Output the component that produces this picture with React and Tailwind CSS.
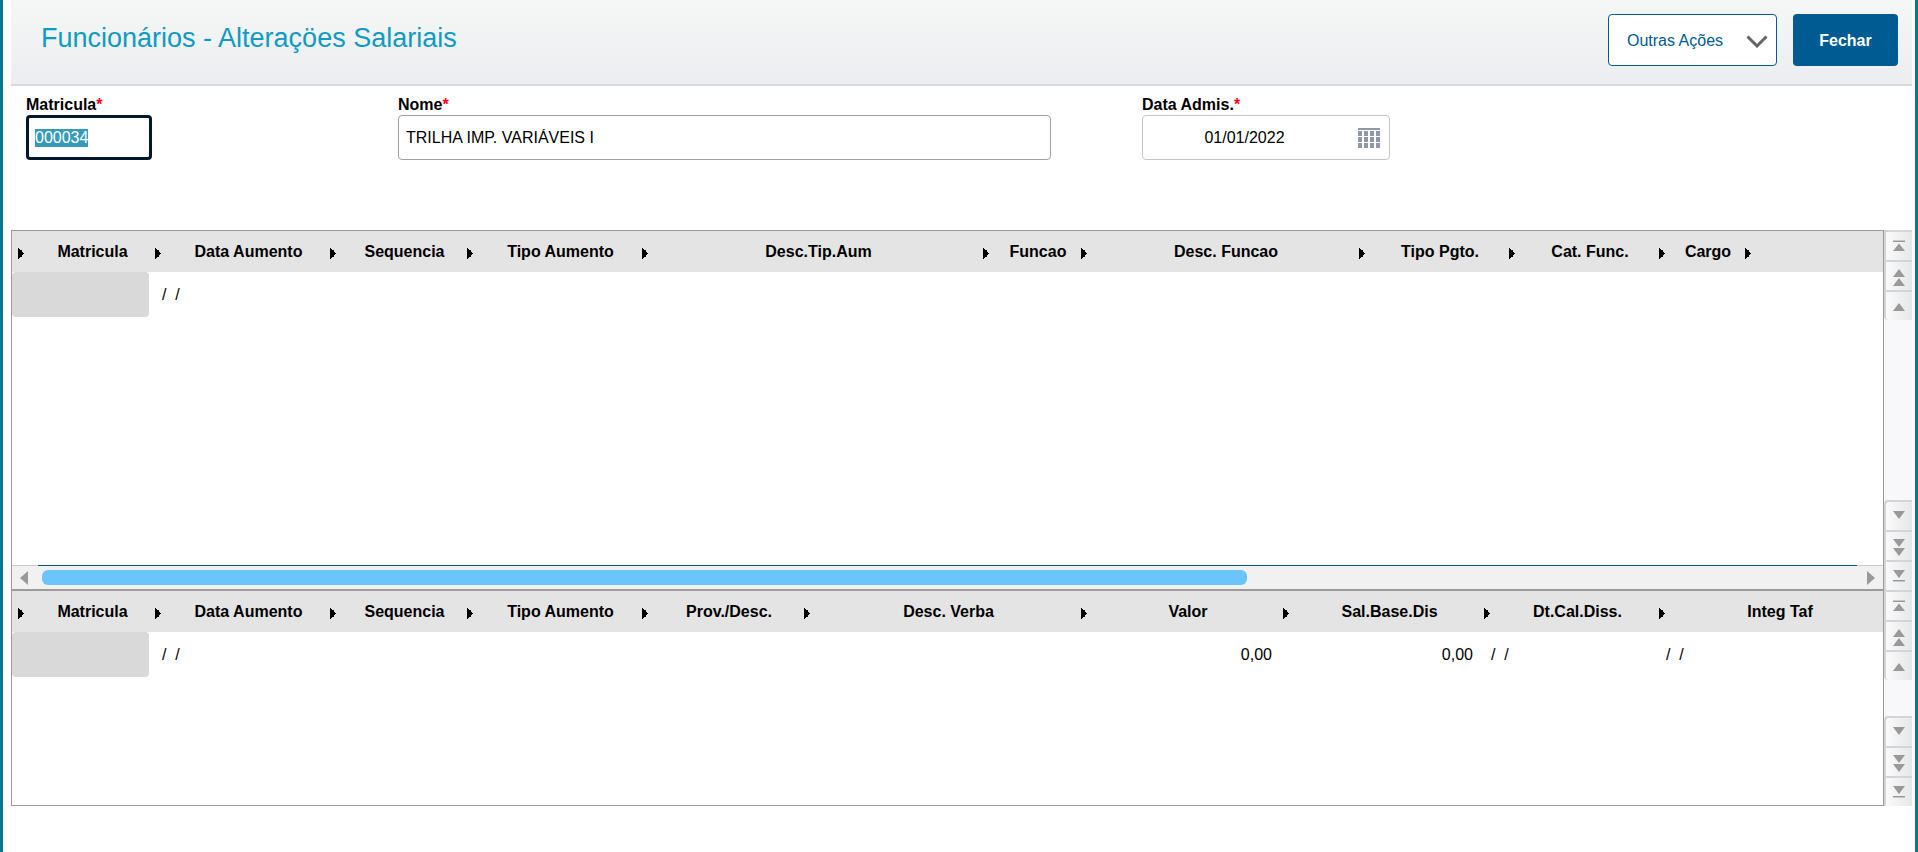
import { useEffect, useRef } from 'react'

const salaryColumns = [
  { label: 'Matricula', width: 137, locked: true },
  { label: 'Data Aumento', width: 175, value: '/  /' },
  { label: 'Sequencia', width: 137 },
  { label: 'Tipo Aumento', width: 175 },
  { label: 'Desc.Tip.Aum', width: 341 },
  { label: 'Funcao', width: 98 },
  { label: 'Desc. Funcao', width: 278 },
  { label: 'Tipo Pgto.', width: 150 },
  { label: 'Cat. Func.', width: 150 },
  { label: 'Cargo', width: 86 },
  { label: '' },
]

const paymentColumns = [
  { label: 'Matricula', width: 137, locked: true },
  { label: 'Data Aumento', width: 175, value: '/  /' },
  { label: 'Sequencia', width: 137 },
  { label: 'Tipo Aumento', width: 175 },
  { label: 'Prov./Desc.', width: 162 },
  { label: 'Desc. Verba', width: 277 },
  { label: 'Valor', width: 202, value: '0,00', numeric: true },
  { label: 'Sal.Base.Dis', width: 201, value: '0,00', numeric: true },
  { label: 'Dt.Cal.Diss.', width: 175, value: '/  /' },
  { label: 'Integ Taf', value: '/  /' },
]

const navIcons = {
  first: 'M2 4.5h12V6H2zM8 7.5l6 7.5H2z',
  pageUp: 'M8 3l6 8H2zM8 12l6 8H2z',
  up: 'M8 7l6 8H2z',
  down: 'M8 13L2 5h12z',
  pageDown: 'M8 11L2 3h12zM8 20l-6-8h12z',
  last: 'M8 12L2 4h12zM2 14h12v1.5H2z',
}

function NavButton({ icon, label, rounded = '' }) {
  return (
    <button
      type="button"
      aria-label={label}
      className={`flex h-[30px] w-full items-center justify-center border-t-2 border-l-2 border-[#d4d5d6] bg-linear-to-r from-[#fafafb] to-[#e6e7e9] ${rounded}`}
    >
      <svg width="16" height="20" viewBox="0 0 16 20" fill="#999" aria-hidden="true">
        <path d={navIcons[icon]} />
      </svg>
    </button>
  )
}

function NavRail() {
  return (
    <div className="flex w-7 shrink-0 flex-col justify-between bg-[#f8f8fb]">
      <div>
        <NavButton icon="first" label="Primeiro registro" />
        <NavButton icon="pageUp" label="Página anterior" />
        <NavButton icon="up" label="Registro anterior" rounded="rounded-bl" />
      </div>
      <div>
        <NavButton icon="down" label="Próximo registro" rounded="rounded-tl" />
        <NavButton icon="pageDown" label="Próxima página" />
        <NavButton icon="last" label="Último registro" />
      </div>
    </div>
  )
}

function ColumnArrow() {
  return (
    <svg width="6" height="11" viewBox="0 0 6 11" className="mt-1 shrink-0" shapeRendering="crispEdges" aria-hidden="true">
      <path d="M0 0h1v1h1v1h2v2h1v1h1v1H5v1H4v2H2v1H1v1H0z" />
    </svg>
  )
}

function Grid({ name, columns }) {
  return (
    <table aria-label={name} className="w-full table-fixed border-collapse">
      <colgroup>
        {columns.map((col) => (
          <col key={col.label} style={{ width: col.width }} />
        ))}
      </colgroup>
      <thead>
        <tr className="h-[41px] bg-[#e4e4e4]">
          {columns.map((col) => (
            <th key={col.label} className="p-0 pl-1.5 font-bold whitespace-nowrap">
              <div className="flex items-center">
                <ColumnArrow />
                <span className="ml-3 flex-1 text-center">{col.label}</span>
              </div>
            </th>
          ))}
        </tr>
      </thead>
      <tbody>
        <tr className="h-[45px]">
          {columns.map((col) => (
            <td
              key={col.label}
              className={`p-0 whitespace-pre ${col.locked ? 'rounded-sm bg-[#d9d9d9]' : ''} ${
                col.numeric ? 'pr-[5px] text-right' : 'pl-[13px]'
              }`}
            >
              {col.value}
            </td>
          ))}
        </tr>
      </tbody>
    </table>
  )
}

function HorizontalScroll() {
  return (
    <div className="flex h-6 items-stretch bg-[#f1f1f1]">
      <button
        type="button"
        aria-label="Rolar para a esquerda"
        className="flex w-[26px] items-center justify-start border-t border-[#c9caca] pl-2"
      >
        <svg width="8" height="14" viewBox="0 0 8 14" fill="#999" aria-hidden="true">
          <path d="M8 0v14L0 7z" />
        </svg>
      </button>
      <div className="flex flex-1 items-center border-t border-[#005c8a] pl-1">
        <div className="h-[15px] w-[66.4%] rounded-md bg-[#6bc4fb]" />
      </div>
      <button
        type="button"
        aria-label="Rolar para a direita"
        className="flex w-[26px] items-center justify-end border-t border-[#c9caca] pr-2"
      >
        <svg width="8" height="14" viewBox="0 0 8 14" fill="#999" aria-hidden="true">
          <path d="M0 0v14l8-7z" />
        </svg>
      </button>
    </div>
  )
}

function FieldLabel({ htmlFor, children }) {
  return (
    <label htmlFor={htmlFor} className="block leading-5 font-bold">
      {children}
      <span className="text-[#ff0020]">*</span>
    </label>
  )
}

function CalendarIcon() {
  const cells = [3, 9, 15]
  return (
    <svg width="22" height="20" viewBox="0 0 22 20" fill="#9098a6" shapeRendering="crispEdges" aria-hidden="true">
      <rect width="22" height="2" />
      {cells.map((y) =>
        [0, 6, 12, 18].map((x) => <rect key={`${x}-${y}`} x={x} y={y} width="4" height="5" />),
      )}
    </svg>
  )
}

export default function App() {
  const matriculaRef = useRef(null)

  // The form opens with the first field ready to be overwritten
  useEffect(() => {
    matriculaRef.current?.focus()
    matriculaRef.current?.select()
  }, [])

  return (
    <div className="min-h-screen border-x-3 border-[#0b768f] bg-white pr-[3px] pl-2 font-['Liberation_Sans',Arial,sans-serif] text-base text-black">
      <header className="flex h-[86px] items-start justify-between border-b-2 border-[#d8d9da] bg-linear-to-b from-[#f5f7f6] to-[#ecedf0] pt-3.5 pr-3.5 pl-[30px]">
        <h1 className="pt-1.5 text-[27px] leading-9 text-[#109bc0]">Funcionários - Alteraçöes Salariais</h1>
        <div className="flex gap-4">
          <button
            type="button"
            className="flex h-[52px] w-[169px] items-center justify-between rounded-[4px] border border-[#005b92] bg-white pt-0.5 pr-2 pl-[18px] text-[#005b92]"
          >
            Outras Ações
            <svg width="22" height="14" viewBox="0 0 22 14" fill="none" stroke="#666" strokeWidth="3" aria-hidden="true">
              <path d="M1.5 2.5L11 12l9.5-9.5" />
            </svg>
          </button>
          <button type="button" className="h-[52px] w-[105px] rounded-[4px] bg-[#005b92] pt-0.5 font-bold text-white">
            Fechar
          </button>
        </div>
      </header>

      <form className="grid h-36 grid-cols-[372px_744px_1fr] items-start pt-[9px] pl-[15px]">
        <div>
          <FieldLabel htmlFor="matricula">Matricula</FieldLabel>
          <input
            id="matricula"
            ref={matriculaRef}
            defaultValue="000034"
            className="h-[45px] w-[126px] rounded-[4px] border-[3px] border-[#04182c] px-1.5 outline-none selection:bg-[#369ab8] selection:text-white"
          />
        </div>
        <div>
          <FieldLabel htmlFor="nome">Nome</FieldLabel>
          <input
            id="nome"
            defaultValue="TRILHA IMP. VARIÁVEIS I"
            className="h-[45px] w-[653px] rounded-[4px] border border-[#9da3a5] px-[7px] outline-none"
          />
        </div>
        <div>
          <FieldLabel htmlFor="admissao">Data Admis.</FieldLabel>
          <div className="flex h-[45px] w-[248px] items-center rounded-[4px] border border-[#c2c6c7] pr-[9px]">
            <input id="admissao" defaultValue="01/01/2022" className="w-0 flex-1 pr-3 text-center outline-none" />
            <button type="button" aria-label="Abrir calendário">
              <CalendarIcon />
            </button>
          </div>
        </div>
      </form>

      <section className="flex h-[360px]">
        <div className="flex min-w-0 flex-1 flex-col border border-[#9b9b9b]">
          <div className="flex-1 overflow-hidden">
            <Grid name="Aumentos salariais" columns={salaryColumns} />
          </div>
          <HorizontalScroll />
        </div>
        <NavRail />
      </section>

      <section className="flex h-[216px]">
        <div className="min-w-0 flex-1 overflow-hidden border border-[#9b9b9b]">
          <Grid name="Verbas do aumento" columns={paymentColumns} />
        </div>
        <NavRail />
      </section>
    </div>
  )
}
